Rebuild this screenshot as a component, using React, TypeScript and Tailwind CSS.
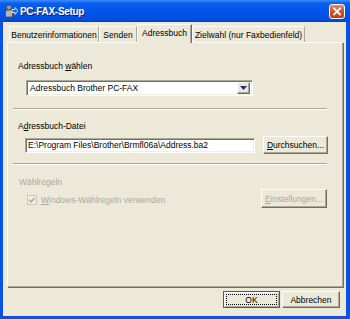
import React from "react";

const raised =
  "border border-t-white border-l-white border-r-[#716F64] border-b-[#716F64] shadow-[inset_-1px_-1px_0_#ACA899] bg-[#ECE9D8]";
const sunken =
  "border border-t-[#ACA899] border-l-[#ACA899] border-r-white border-b-white shadow-[inset_1px_1px_0_#716F64,inset_-1px_-1px_0_#F1EFE2]";
const separator = "h-[2px] border-t border-b border-t-[#ACA899] border-b-white";

function TitleIcon() {
  return (
    <svg width="14" height="14" viewBox="0 0 14 14">
      <circle cx="5" cy="3.5" r="2.5" fill="#9a9a9a" stroke="#4a4a4a" strokeWidth="0.8" />
      <path d="M1.5 13 L1.5 8 Q1.5 6 3.5 6 L6.5 6 Q8.5 6 8.5 8 L8.5 13 Z" fill="#b5b5b5" stroke="#4a4a4a" strokeWidth="0.8" />
      <path d="M8 5.5 L11 5.5 L11 3.5 L14 7 L11 10.5 L11 8.5 L8 8.5 Z" fill="#2a5bd8" stroke="#ffffff" strokeWidth="0.8" />
    </svg>
  );
}

function CloseButton() {
  return (
    <div className="w-[16px] h-[15px] rounded-[3px] border border-white bg-[linear-gradient(to_bottom,#E98C6E_0%,#D9532C_45%,#C23F1A_100%)] flex items-center justify-center">
      <svg width="10" height="9" viewBox="0 0 10 9">
        <path d="M2 1.5 L8 7.5 M8 1.5 L2 7.5" stroke="#ffffff" strokeWidth="1.8" strokeLinecap="square" />
      </svg>
    </div>
  );
}

function Tab({ label, width, active }: { label: string; width: string; active?: boolean }) {
  if (active) {
    return (
      <div
        className={`relative z-10 -mb-px h-[19px] ${width} border-t border-l border-r border-t-white border-l-white border-r-[#716F64] shadow-[inset_-1px_0_0_#ACA899] bg-[#ECE9D8] flex justify-center pt-[3px] leading-[10px] whitespace-nowrap`}
      >
        {label}
      </div>
    );
  }
  return (
    <div
      className={`h-[16px] ${width} border-t border-l border-r border-t-white border-l-white border-r-[#ACA899] bg-[#ECE9D8] flex justify-center pt-[3px] leading-[10px] whitespace-nowrap`}
    >
      {label}
    </div>
  );
}

export default function App() {
  return (
    <div className="w-[350px] h-[319px] flex flex-col font-['Liberation_Sans',Arial,sans-serif] text-[8.5px] text-black select-none">
      {/* title bar */}
      <div className="h-[22px] flex items-center bg-[linear-gradient(to_bottom,#3D8EF8_0%,#0A5EF0_15%,#0055EA_50%,#0050E2_85%,#0042C8_100%)] pl-[4px] pr-[5px]">
        <TitleIcon />
        <span className="ml-[2px] text-white font-bold text-[10px] tracking-[-0.3px] [text-shadow:1px_1px_0_#0A1F78]">
          PC-FAX-Setup
        </span>
        <div className="ml-auto">
          <CloseButton />
        </div>
      </div>

      {/* body */}
      <div className="flex-1 flex flex-col bg-[#ECE9D8] border-l-[3px] border-r-[4px] border-b-[3px] border-[#0A52E4]">
        {/* tabs */}
        <div className="flex items-end h-[18px] mt-[2px] ml-[6px]">
          <Tab label="Benutzerinformationen" width="w-[90px]" />
          <Tab label="Senden" width="w-[38px]" />
          <Tab label="Adressbuch" width="w-[55px]" active />
          <Tab label="Zielwahl (nur Faxbedienfeld)" width="w-[113px]" />
        </div>

        {/* tab panel */}
        <div className="ml-[4px] w-[336px] h-[245px] border border-t-white border-l-white border-r-[#ACA899] border-b-[#ACA899] shadow-[1px_1px_0_#716F64] pt-[18px] flex flex-col">
          <div className="ml-[10px] leading-[11px]">
            Adressbuch <u>w</u>ählen
          </div>
          <div className={`mt-[8px] ml-[18px] w-[227px] h-[16px] bg-white flex items-center p-[2px] ${sunken}`}>
            <span className="flex-1 pl-[1px] leading-[10px] whitespace-nowrap">Adressbuch Brother PC-FAX</span>
            <div className={`w-[13px] h-[12px] flex items-center justify-center ${raised}`}>
              <svg width="7" height="4" viewBox="0 0 7 4">
                <path d="M0 0 H7 L3.5 4 Z" fill="#1B2A86" />
              </svg>
            </div>
          </div>

          <div className={`mt-[12px] ml-[5px] w-[314px] ${separator}`} />

          <div className="mt-[11px] ml-[10px] leading-[11px]">
            A<u>d</u>ressbuch-Datei
          </div>
          <div className="mt-[4px] h-[18px] flex items-center">
            <div className={`ml-[17px] w-[230px] h-[15px] bg-white flex items-center pl-[2px] ${sunken}`}>
              <span className="leading-[10px] whitespace-nowrap">E:\Program Files\Brother\Brmfl06a\Address.ba2</span>
            </div>
            <div className={`ml-[8px] w-[65px] h-[18px] flex items-center justify-center leading-[10px] whitespace-nowrap ${raised}`}>
              <span>
                <u>D</u>urchsuchen...
              </span>
            </div>
          </div>

          <div className={`mt-[9px] ml-[5px] w-[314px] ${separator}`} />

          <div className="mt-[12px] ml-[11px] leading-[11px] text-[#ACA899]">Wählregeln</div>
          <div className="mt-[1px] h-[19px] flex items-start">
            <div className="ml-[19px] mt-[6px] h-[10px] flex items-center">
              <div className="w-[10px] h-[10px] border border-[#C9C7BA] bg-[#F1EFE2] flex items-center justify-center">
                <svg width="8" height="8" viewBox="0 0 8 8">
                  <path d="M1.2 3.8 L3.2 5.8 L6.8 2" fill="none" stroke="#ACA899" strokeWidth="1.5" />
                </svg>
              </div>
              <span className="ml-[4px] leading-[10px] text-[#ACA899] whitespace-nowrap">
                <u>W</u>indows-Wählregeln verwenden
              </span>
            </div>
            <div className={`ml-auto mr-[15px] w-[66px] h-[19px] flex items-center justify-center leading-[10px] text-[#ACA899] whitespace-nowrap ${raised}`}>
              <span>
                <u>E</u>instellungen...
              </span>
            </div>
          </div>
        </div>

        {/* bottom buttons */}
        <div className="mt-[4px] pr-[6px] flex justify-end gap-[2px]">
          <div className="w-[57px] h-[17px] border border-[#5A5850] shadow-[inset_1px_1px_0_#ffffff,inset_-1px_-1px_0_#ACA899] bg-[#ECE9D8] flex items-center justify-center leading-[10px] outline-1 outline-dotted outline-black -outline-offset-4">
            OK
          </div>
          <div className={`w-[58px] h-[17px] flex items-center justify-center leading-[10px] ${raised}`}>Abbrechen</div>
        </div>
      </div>
    </div>
  );
}
